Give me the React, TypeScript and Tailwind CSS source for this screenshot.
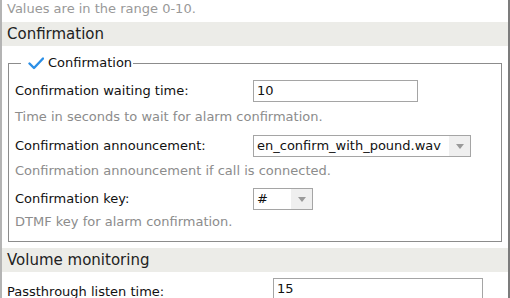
import React from 'react';

function CheckIcon() {
	return (
		<svg width="16" height="13" viewBox="0 0 16 13" className="block">
			<path d="M1.5 6.5 L6 11 L15 1.5" fill="none" stroke="#2b8fe6" strokeWidth="2.4" strokeLinecap="round" strokeLinejoin="round" />
		</svg>
	);
}

function Arrow() {
	return (
		<svg width="8" height="5" viewBox="0 0 8 5" className="block">
			<path d="M0 0 L8 0 L4 5 Z" fill="#9a9a9a" />
		</svg>
	);
}

function Select({ value, width }: { value: string; width: string }) {
	return (
		<div className={`flex h-[22px] ${width} border border-[#a5a5a5] bg-white`}>
			<span className="flex-1 pl-[3px] leading-[20px] text-[#111] truncate">{value}</span>
			<span className="flex w-[21px] items-center justify-center bg-[#efefef]">
				<Arrow />
			</span>
		</div>
	);
}

export default function App() {
	return (
		<div
			className="h-[298px] w-[510px] overflow-hidden bg-white text-[13px]"
			style={{ fontFamily: '"DejaVu Sans", Verdana, sans-serif' }}
		>
			<div className="h-full border-l-2 border-r-2 border-l-[#b4b4b4] border-r-[#7c7c7c]">
				<div className="h-[22px] overflow-hidden pl-[5px]">
					<div className="leading-[17px] text-[#999]">Values are in the range 0-10.</div>
				</div>

				<div className="h-[24px] bg-[#ecece8] pl-[5px] text-[15px] leading-[24px] text-[#222]">Confirmation</div>

				<fieldset className="mx-[6px] mt-[8px] border border-[#8c8c8c] px-[6px] pb-[11px]">
					<legend className="ml-[6px] pr-[1px]">
						<span className="flex items-center leading-[18px] text-[#111]">
							<span className="ml-[7px] mr-[4px]">
								<CheckIcon />
							</span>
							Confirmation
						</span>
					</legend>

					<div className="mt-[8px] flex h-[22px] items-center">
						<span className="w-[238px] text-[#111]">Confirmation waiting time:</span>
						<div className="h-[22px] w-[165px] border border-[#a5a5a5] pl-[3px] leading-[20px] text-[#111]">10</div>
					</div>
					<div className="mt-[7px] leading-[16px] text-[#8c8c8c]">Time in seconds to wait for alarm confirmation.</div>

					<div className="mt-[10px] flex h-[22px] items-center">
						<span className="w-[238px] text-[#111]">Confirmation announcement:</span>
						<Select value="en_confirm_with_pound.wav" width="w-[218px]" />
					</div>
					<div className="mt-[6px] leading-[16px] text-[#8c8c8c]">Confirmation announcement if call is connected.</div>

					<div className="mt-[9px] flex h-[22px] items-center">
						<span className="w-[238px] text-[#111]">Confirmation key:</span>
						<Select value="#" width="w-[60px]" />
					</div>
					<div className="mt-[4px] leading-[16px] text-[#8c8c8c]">DTMF key for alarm confirmation.</div>
				</fieldset>

				<div className="mt-[6px] h-[24px] bg-[#ecece8] pl-[5px] text-[15px] leading-[24px] text-[#222]">Volume monitoring</div>

				<div className="mt-[6px] flex items-start pl-[5px]">
					<span className="w-[266px] pt-[4px] text-[#111]">Passthrough listen time:</span>
					<div className="h-[22px] w-[210px] border border-[#a5a5a5] pl-[3px] leading-[20px] text-[#111]">15</div>
				</div>
			</div>
		</div>
	);
}
